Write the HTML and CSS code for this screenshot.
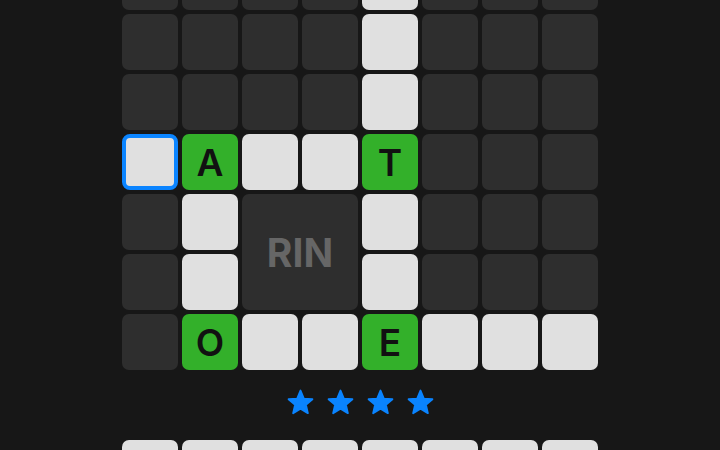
FILE: index.html
```html
<!DOCTYPE html>
<html>
<head>
<meta charset="utf-8">
<link rel="stylesheet" href="styles.css">
</head>
<body>
<div class="page">
  <div class="board">
    <div class="cell dark"></div><div class="cell dark"></div><div class="cell dark"></div><div class="cell dark"></div><div class="cell light"></div><div class="cell dark"></div><div class="cell dark"></div><div class="cell dark"></div>

    <div class="cell dark"></div><div class="cell dark"></div><div class="cell dark"></div><div class="cell dark"></div><div class="cell light"></div><div class="cell dark"></div><div class="cell dark"></div><div class="cell dark"></div>

    <div class="cell dark"></div><div class="cell dark"></div><div class="cell dark"></div><div class="cell dark"></div><div class="cell light"></div><div class="cell dark"></div><div class="cell dark"></div><div class="cell dark"></div>

    <div class="cell light selected"></div><div class="cell green">A</div><div class="cell light"></div><div class="cell light"></div><div class="cell green">T</div><div class="cell dark"></div><div class="cell dark"></div><div class="cell dark"></div>

    <div class="cell dark"></div><div class="cell light"></div><div class="cell clue">RIN</div><div class="cell light"></div><div class="cell dark"></div><div class="cell dark"></div><div class="cell dark"></div>

    <div class="cell dark"></div><div class="cell light"></div><div class="cell light"></div><div class="cell dark"></div><div class="cell dark"></div><div class="cell dark"></div>

    <div class="cell dark"></div><div class="cell green">O</div><div class="cell light"></div><div class="cell light"></div><div class="cell green">E</div><div class="cell light"></div><div class="cell light"></div><div class="cell light"></div>
  </div>

  <div class="stars">
    <svg class="star" viewBox="0 0 28 28"><polygon points="14,2.5 17.2,10.2 25.5,10.8 19.2,16.2 21.1,24.3 14,19.9 6.9,24.3 8.8,16.2 2.5,10.8 10.8,10.2"/></svg>
    <svg class="star" viewBox="0 0 28 28"><polygon points="14,2.5 17.2,10.2 25.5,10.8 19.2,16.2 21.1,24.3 14,19.9 6.9,24.3 8.8,16.2 2.5,10.8 10.8,10.2"/></svg>
    <svg class="star" viewBox="0 0 28 28"><polygon points="14,2.5 17.2,10.2 25.5,10.8 19.2,16.2 21.1,24.3 14,19.9 6.9,24.3 8.8,16.2 2.5,10.8 10.8,10.2"/></svg>
    <svg class="star" viewBox="0 0 28 28"><polygon points="14,2.5 17.2,10.2 25.5,10.8 19.2,16.2 21.1,24.3 14,19.9 6.9,24.3 8.8,16.2 2.5,10.8 10.8,10.2"/></svg>
  </div>

  <div class="board">
    <div class="cell light"></div><div class="cell light"></div><div class="cell light"></div><div class="cell light"></div><div class="cell light"></div><div class="cell light"></div><div class="cell light"></div><div class="cell light"></div>
  </div>
</div>
</body>
</html>
```

FILE: styles.css
```css
html, body {
  margin: 0;
  padding: 0;
  background: #171717;
  overflow: hidden;
}
body {
  width: 720px;
  height: 450px;
  font-family: Inter, "Noto Sans", sans-serif;
}
.page {
  display: flex;
  flex-direction: column;
  align-items: center;
  margin-top: -46px;
}
.board {
  display: grid;
  grid-template-columns: repeat(8, 56px);
  grid-auto-rows: 56px;
  gap: 4px;
}
.cell {
  border-radius: 7px;
  box-sizing: border-box;
  display: flex;
  align-items: center;
  justify-content: center;
  font-size: 37px;
  font-weight: 600;
  color: #111;
}
.dark { background: #2e2e2e; }
.light { background: #e0e0e0; }
.green { background: #33b02a; }
.selected { border: 4px solid #0a84ff; border-radius: 8px; }
.clue {
  grid-column: span 2;
  grid-row: span 2;
  background: #2e2e2e;
  color: #666;
  font-size: 39px;
  font-weight: 700;
}
.stars {
  height: 64px;
  padding-bottom: 6px;
  display: flex;
  align-items: center;
  justify-content: center;
  gap: 11px;
}
.star {
  width: 29px;
  height: 29px;
  display: block;
}
.star polygon {
  fill: #0a84ff;
  stroke: #0a84ff;
  stroke-width: 1.8;
  stroke-linejoin: round;
}
```
